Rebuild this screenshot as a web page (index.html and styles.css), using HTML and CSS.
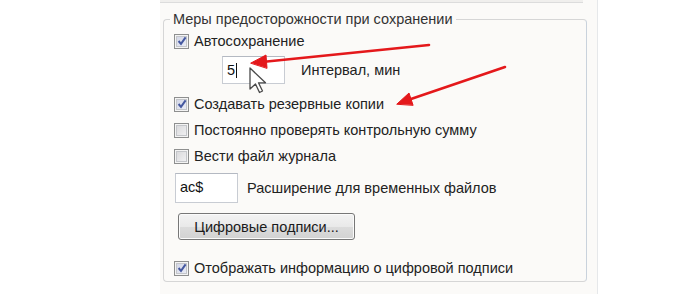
FILE: index.html
```html
<!DOCTYPE html>
<html lang="ru">
<head>
    <meta charset="UTF-8">
    <meta name="viewport" content="width=device-width, initial-scale=1.0">
    <link rel="stylesheet" href="styles.css">
    <title>Параметры сохранения</title>
</head>
<body>
    <div class="panel">
        <div class="top-strip"></div>

        <fieldset class="group">
            <legend>Меры предосторожности при сохранении</legend>

            <div class="row">
                <span class="check on"><svg viewBox="0 0 10 10"><path d="M1.6 5 L4 7.9 L8.6 1.4"/></svg></span>
                <span>Автосохранение</span>
            </div>

            <div class="row row-interval">
                <div class="textbox tb-interval">5<span class="caret"></span></div>
                <span>Интервал, мин</span>
            </div>

            <div class="row row-gap">
                <span class="check on"><svg viewBox="0 0 10 10"><path d="M1.6 5 L4 7.9 L8.6 1.4"/></svg></span>
                <span>Создавать резервные копии</span>
            </div>

            <div class="row">
                <span class="check"></span>
                <span>Постоянно проверять контрольную сумму</span>
            </div>

            <div class="row">
                <span class="check"></span>
                <span>Вести файл журнала</span>
            </div>

            <div class="row row-ext">
                <div class="textbox tb-ext">ac$</div>
                <span>Расширение для временных файлов</span>
            </div>

            <div class="row row-btn">
                <button class="btn">Цифровые подписи...</button>
            </div>

            <div class="row row-last">
                <span class="check on"><svg viewBox="0 0 10 10"><path d="M1.6 5 L4 7.9 L8.6 1.4"/></svg></span>
                <span>Отображать информацию о цифровой подписи</span>
            </div>
        </fieldset>
    </div>

    <!-- red arrows and mouse pointer drawn over the dialog -->
    <svg class="overlay" width="700" height="294" viewBox="0 0 700 294">
        <g stroke="#e4181b" stroke-width="2.6" stroke-linecap="round" fill="#e4181b">
            <line x1="429" y1="45" x2="262" y2="62"/>
            <polygon points="251,63 266,55 267,68" stroke-width="1"/>
            <line x1="505" y1="67" x2="408" y2="100"/>
            <polygon points="397,104 409,93 413,105" stroke-width="1"/>
        </g>
        <path class="pointer" d="M250 68 L250 89 L255.5 84 L259.5 92.5 L262.5 91 L258.5 82.8 L265.5 82.8 Z"/>
    </svg>
</body>
</html>
```

FILE: styles.css
```css
body {
    margin: 0;
    background: #fff;
    font-family: "Liberation Sans", "DejaVu Sans", sans-serif;
    font-size: 14.5px;
    color: #222;
}
.panel {
    margin-left: 160px;
    width: 437px;
    height: 294px;
    background: #fbfaf8;
    border-right: 1px solid #e6e8ea;
}
.top-strip {
    width: 423px;
    height: 2px;
    background: #f0efed;
    border-bottom: 1px solid #dcdcdc;
}
.group {
    margin: 8px 10px 0 3px;
    padding: 1px 0 0 10px;
    border: 1px solid #d6d6d6;
    border-right-color: #c9d2dc;
    border-radius: 4px;
    min-inline-size: 0;
}
.group legend {
    padding: 0 3px;
    margin-left: -4px;
    line-height: 16px;
    color: #333;
}
.row {
    display: flex;
    align-items: center;
    height: 26px;
    gap: 5px;
}
.row-interval {
    height: 32px;
    gap: 16px;
    padding-left: 48px;
}
.row-gap {
    margin-top: 5px;
}
.row-ext {
    height: 30px;
    margin-top: 4px;
    gap: 9px;
    padding-left: 1px;
}
.row-btn {
    height: 27px;
    margin-top: 10px;
    padding-left: 4px;
}
.row-last {
    margin-top: 15px;
}
.check {
    width: 13px;
    height: 13px;
    border: 1px solid #8e8f8f;
    box-shadow: inset 0 0 0 1px #f4f4f4, inset 0 0 0 2px #c4c6ca;
    background: linear-gradient(135deg, #d6d6d8, #f4f4f6);
    display: flex;
    align-items: center;
    justify-content: center;
    flex: none;
}
.check.on {
    background: linear-gradient(135deg, #cfd3e4, #eef0f8);
}
.check svg {
    width: 10px;
    height: 10px;
}
.check path {
    fill: none;
    stroke: #4558a0;
    stroke-width: 2;
}
.textbox {
    box-sizing: border-box;
    background: #fff;
    border: 1px solid #c8ccd3;
    border-top-color: #b4b9c2;
    padding: 0 4px;
    display: flex;
    align-items: center;
    color: #111;
}
.tb-interval {
    width: 63px;
    height: 28px;
}
.tb-ext {
    width: 63px;
    height: 30px;
    padding-bottom: 3px;
}
.caret {
    width: 1px;
    height: 15px;
    margin-left: 1px;
    background: #111;
}
.btn {
    width: 177px;
    height: 27px;
    border: 1px solid #777;
    border-radius: 3px;
    background: linear-gradient(#f3f3f3, #e9e9e9 50%, #dcdcdc 51%, #d2d2d2);
    box-shadow: inset 0 0 0 1px #fbfbfb;
    font-family: inherit;
    font-size: 14.5px;
    color: #1a1a1a;
    padding: 0;
}
.overlay {
    position: absolute;
    top: 0;
    left: 0;
}
.pointer {
    fill: #fff;
    stroke: #4a4a4a;
    stroke-width: 1.3;
    stroke-linejoin: round;
}
```
